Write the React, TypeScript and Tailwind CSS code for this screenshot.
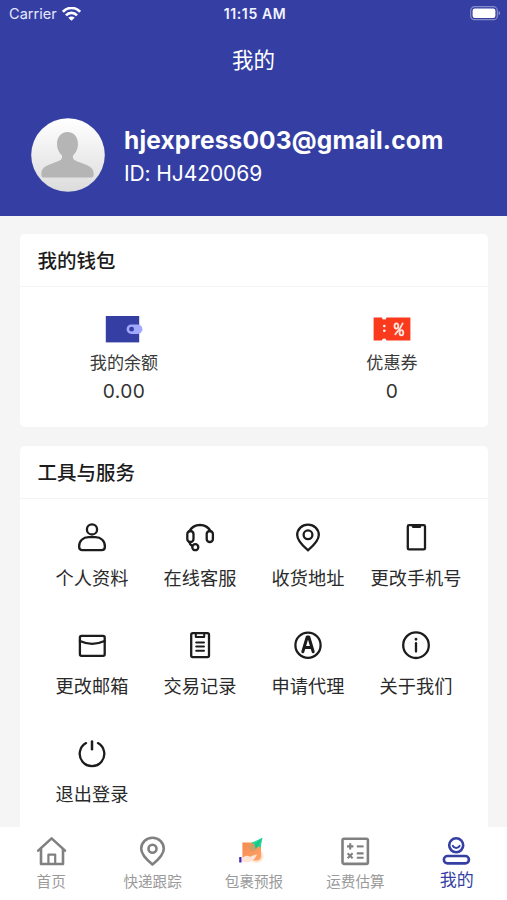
import type { ReactNode } from "react";

interface Item {
  label: string;
  icon: ReactNode;
}

const TOOLS: Item[] = [
  { label: "个人资料", icon: <PersonIcon /> },
  { label: "在线客服", icon: <HeadsetIcon /> },
  { label: "收货地址", icon: <PinIcon /> },
  { label: "更改手机号", icon: <PhoneIcon /> },
  { label: "更改邮箱", icon: <MailIcon /> },
  { label: "交易记录", icon: <RecordIcon /> },
  { label: "申请代理", icon: <AgentIcon /> },
  { label: "关于我们", icon: <InfoIcon /> },
  { label: "退出登录", icon: <PowerIcon /> },
];

const TABS: Item[] = [
  { label: "首页", icon: <HomeIcon /> },
  { label: "快递跟踪", icon: <TrackIcon /> },
  { label: "包裹预报", icon: <ParcelIcon /> },
  { label: "运费估算", icon: <CalcIcon /> },
  { label: "我的", icon: <MeIcon /> },
];

const ACTIVE_TAB = "我的";

export default function App() {
  return (
    <div className="w-[507px] h-[900px] overflow-hidden flex flex-col bg-[#f5f5f5] font-['Inter','Noto_Sans_CJK_SC',sans-serif] text-[#2a2a2a]">
      {/* Header */}
      <header className="h-[216px] shrink-0 bg-[#353fa3] text-white flex flex-col">
        <StatusBar />
        <h1 className="h-16 pt-[2px] flex items-center justify-center text-[21.5px] leading-none">我的</h1>
        <div className="flex items-center gap-[19px] pl-[31px] mt-[26px]">
          <Avatar />
          <div className="flex flex-col pt-[3px]">
            <p className="text-[24.5px] leading-[33px] font-bold tracking-[0.15px]">hjexpress003@gmail.com</p>
            <p className="text-[21px] leading-[33px] tracking-[-0.1px]">ID: HJ420069</p>
          </div>
        </div>
      </header>

      <main className="flex-1 min-h-0 px-[19.5px] pt-[18px] flex flex-col gap-[19px] overflow-hidden">
        <Card title="我的钱包" className="h-[193px]">
          <div className="flex justify-between pl-[50px] pr-[42px] pt-[27px]">
            <WalletStat icon={<WalletIcon />} label="我的余额" value="0.00" />
            <WalletStat icon={<CouponIcon />} label="优惠券" value="0" />
          </div>
        </Card>

        <Card title="工具与服务" className="h-[420px]">
          <div className="grid grid-cols-4 auto-rows-[108px] px-[18px] pt-[22px]">
            {TOOLS.map((t) => (
              <div key={t.label} className="flex flex-col items-center">
                {t.icon}
                <span className="mt-[13px] pl-px text-[18.2px] leading-[24px] whitespace-nowrap">{t.label}</span>
              </div>
            ))}
          </div>
        </Card>
      </main>

      {/* Tab bar */}
      <nav className="h-[73px] shrink-0 bg-white grid grid-cols-5">
        {TABS.map((t) => (
          <div key={t.label} className="flex flex-col items-center pt-[8px]">
            {t.icon}
            {t.label === ACTIVE_TAB ? (
              <span className="mt-px pl-px text-[17px] leading-[20px] text-[#353fa3]">{t.label}</span>
            ) : (
              <span className="mt-[4px] pl-px text-[14.6px] leading-[18px] text-[#9a9a9a]">{t.label}</span>
            )}
          </div>
        ))}
      </nav>
    </div>
  );
}

/* ── Layout pieces ───────────────────────────────────────── */

function StatusBar() {
  return (
    <div className="h-7 grid grid-cols-3 items-center pl-[9px] pr-[6px] text-[14.5px] leading-none">
      <div className="flex items-center gap-[5px] text-[#e6e8ff]">
        <span className="tracking-[0.05px]">Carrier</span>
        <svg width="19" height="15" viewBox="0 0 19 15" fill="none" stroke="#fff" strokeWidth="2.7">
          <path d="M0.9 4.8C5.5-.3 13.5-.3 18.1 4.8" />
          <path d="M4 8.3C7 5.1 12 5.1 15 8.3" />
          <path d="M9.5 13.8L6.3 10.7C8.1 9 10.9 9 12.7 10.7Z" fill="#fff" stroke="none" />
        </svg>
      </div>
      <span className="text-center font-semibold text-[14px] tracking-[0.6px] text-[#f2f3ff]">11:15 AM</span>
      <svg className="justify-self-end" width="31" height="16" viewBox="0 0 31 16">
        <rect x="0.7" y="0.7" width="26.6" height="13" rx="3.8" fill="none" stroke="#fff" strokeOpacity="0.4" strokeWidth="1.2" />
        <rect x="2.6" y="2.5" width="22.8" height="9.4" rx="2.2" fill="#fff" />
        <path d="M28.6 5.1C30.6 5.9 30.6 8.5 28.6 9.3Z" fill="#fff" fillOpacity="0.45" />
      </svg>
    </div>
  );
}

function Card({ title, className, children }: { title: string; className: string; children: ReactNode }) {
  return (
    <section className={`shrink-0 bg-white rounded-[5px] ${className}`}>
      <h2 className="h-[53px] pl-[18px] pt-[3px] flex items-center border-b-[1.5px] border-[#f4f4f4] text-[19.5px] leading-none font-medium text-[#1c1c1c]">
        {title}
      </h2>
      {children}
    </section>
  );
}

function WalletStat({ icon, label, value }: { icon: ReactNode; label: string; value: string }) {
  return (
    <div className="w-[108px] flex flex-col items-center">
      {icon}
      <span className="mt-[7px] pl-px text-[17.1px] leading-[24px] text-[#3a3a3a]">{label}</span>
      <span className="mt-[3px] pl-px text-[19.2px] leading-[26px] tracking-[0.4px] text-[#333]">{value}</span>
    </div>
  );
}

function Avatar() {
  return (
    <svg width="74" height="74" viewBox="0 0 74 74">
      <defs>
        <linearGradient id="avatar" x1="0" y1="0" x2="0" y2="1">
          <stop offset="0" stopColor="#fff" />
          <stop offset="1" stopColor="#dcdcdc" />
        </linearGradient>
      </defs>
      <circle cx="37" cy="37" r="36.8" fill="url(#avatar)" />
      <path
        d="M36.5 14C30 14 26 19 26 26C26 31 28.4 35.4 31 37.4C31.6 41.4 29.6 42.2 25 44C18 46.6 11 48.6 10.4 54.4V57.6Q10.4 59.4 12.4 59.4H60.6Q62.6 59.4 62.6 57.6V54.4C62 48.6 55 46.6 48 44C43.4 42.2 41.4 41.4 42 37.4C44.6 35.4 47 31 47 26C47 19 43 14 36.5 14Z"
        fill="#b5b5b5"
      />
    </svg>
  );
}

/* ── Wallet icons ────────────────────────────────────────── */

function WalletIcon() {
  return (
    <svg width="38" height="30" viewBox="0 0 38 30">
      <rect x="0.8" y="2" width="33.4" height="26.4" fill="#353fa3" />
      <rect x="21.6" y="10.4" width="15.8" height="9.6" rx="4.8" fill="#a3a8ff" />
      <circle cx="26.6" cy="15.2" r="2.4" fill="#353fa3" />
    </svg>
  );
}

function CouponIcon() {
  return (
    <svg width="38" height="30" viewBox="0 0 38 30">
      <path d="M0.6 3.4H9A2.2 2.2 0 0 0 13.4 3.4H37.4V26.6H13.4A2.2 2.2 0 0 0 9 26.6H0.6Z" fill="#fb3a1d" />
      <g fill="#fff">
        <circle cx="11.3" cy="12" r="1.3" />
        <circle cx="11.3" cy="16.8" r="1.3" />
      </g>
      <g fill="none" stroke="#ffe5df" strokeWidth="1.8">
        <ellipse cx="23.4" cy="12" rx="1.9" ry="2.6" />
        <ellipse cx="28.4" cy="18.8" rx="1.9" ry="2.6" />
        <path d="M30 8.8C28 14 25.6 17 21.8 20.8" />
      </g>
    </svg>
  );
}

/* ── Tool icons ──────────────────────────────────────────── */

function ToolSvg({ children }: { children: ReactNode }) {
  return (
    <svg
      width="32"
      height="32"
      viewBox="0 0 32 32"
      fill="none"
      stroke="#1c1c1c"
      strokeWidth="2.3"
      strokeLinecap="round"
      strokeLinejoin="round"
    >
      {children}
    </svg>
  );
}

function PersonIcon() {
  return (
    <ToolSvg>
      <circle cx="16" cy="8.4" r="5.1" />
      <path d="M12.6 16.2H19.4C25 16.2 28.9 20 28.9 25.4C28.9 28 27.8 29.1 25.6 29.1H6.4C4.2 29.1 3.1 28 3.1 25.4C3.1 20 7 16.2 12.6 16.2Z" />
    </ToolSvg>
  );
}

function HeadsetIcon() {
  return (
    <ToolSvg>
      <path d="M5.4 10.4C7.4 6.4 11.3 4 16 4S24.6 6.4 26.6 10.4" />
      <rect x="3.3" y="10" width="6.2" height="11" rx="3.1" />
      <rect x="22.7" y="10" width="6.2" height="11" rx="3.1" />
      <path d="M5.2 20.8C5.6 22.8 6.6 24 8.2 25" />
      <circle cx="11.3" cy="26.2" r="3" />
    </ToolSvg>
  );
}

function PinIcon() {
  return (
    <ToolSvg>
      <path d="M16 29.3C13.6 27.2 5.2 20.6 5.2 14.1C5.2 8.1 10 3.6 16 3.6S26.8 8.1 26.8 14.1C26.8 20.6 18.4 27.2 16 29.3Z" />
      <circle cx="16" cy="13.8" r="4.4" />
    </ToolSvg>
  );
}

function PhoneIcon() {
  return (
    <ToolSvg>
      <rect x="7.8" y="4.2" width="17.2" height="24.2" rx="1.2" />
      <path d="M13.4 5.4H19.6" strokeWidth="3.2" />
    </ToolSvg>
  );
}

function MailIcon() {
  return (
    <ToolSvg>
      <rect x="3.9" y="6.8" width="24.8" height="20" rx="1.6" />
      <path d="M3.9 12Q16 17.6 28.7 12" />
    </ToolSvg>
  );
}

function RecordIcon() {
  return (
    <ToolSvg>
      <rect x="7.2" y="4.2" width="17.8" height="24" rx="1.6" />
      <path d="M11.8 4.4V8H20.2V4.4" strokeWidth="2" />
      <path d="M12.2 13.4H20M12.2 17.6H20M12.2 21.8H20" strokeWidth="2" />
    </ToolSvg>
  );
}

function AgentIcon() {
  return (
    <ToolSvg>
      <circle cx="16" cy="16.2" r="12.6" />
      <path d="M10.8 22.7L15.2 8H16.8L21.2 22.7M12.4 18.4H19.6" strokeWidth="3" />
    </ToolSvg>
  );
}

function InfoIcon() {
  return (
    <ToolSvg>
      <circle cx="16" cy="16.2" r="12.8" />
      <path d="M16 14.2V22.6" strokeWidth="2.3" />
      <path d="M16 10V10.3" strokeWidth="2.7" />
    </ToolSvg>
  );
}

function PowerIcon() {
  return (
    <ToolSvg>
      <path d="M10 6.1A12.3 12.3 0 1 0 22 6.1" />
      <path d="M16 4.6V12.2" strokeWidth="2.5" />
    </ToolSvg>
  );
}

/* ── Tab icons ───────────────────────────────────────────── */

function TabSvg({ color = "#808080", children }: { color?: string; children: ReactNode }) {
  return (
    <svg width="34" height="34" viewBox="0 0 34 34" fill="none" stroke={color} strokeWidth="2.6" strokeLinejoin="round" strokeLinecap="round">
      {children}
    </svg>
  );
}

function HomeIcon() {
  return (
    <TabSvg>
      <path d="M4.2 15.6L17.6 3.4L31 15.6" />
      <path d="M7 14V29H29V14" />
      <path d="M14.4 28.8V19.6H21.2V28.8" strokeWidth="2.2" />
    </TabSvg>
  );
}

function TrackIcon() {
  return (
    <TabSvg>
      <path d="M17.5 29.5C14.9 27.4 6.2 20.4 6.2 13.8C6.2 7.6 11.1 2.8 17.5 2.8S28.8 7.6 28.8 13.8C28.8 20.4 20.1 27.4 17.5 29.5Z" />
      <circle cx="17.5" cy="13.8" r="4" />
    </TabSvg>
  );
}

function ParcelIcon() {
  return (
    <svg width="34" height="34" viewBox="0 0 34 34">
      <defs>
        <linearGradient id="parcel" x1="0" y1="0" x2="1" y2="1">
          <stop offset="0" stopColor="#f58a4e" />
          <stop offset="1" stopColor="#ffa468" />
        </linearGradient>
        <radialGradient id="glow">
          <stop offset="0.4" stopColor="#ffa868" stopOpacity="0.8" />
          <stop offset="1" stopColor="#ffc9a0" stopOpacity="0" />
        </radialGradient>
      </defs>
      <circle cx="20.5" cy="21" r="8" fill="url(#glow)" />
      <path d="M6.4 7.4H23.4Q25 7.4 25 9V21Q25 25 21 25.2H6.4Z" fill="url(#parcel)" />
      <path d="M12.6 11L19.5 8L20 15L15 16Z" fill="#c2a070" fillOpacity="0.8" />
      <path d="M26.4 2.8L15 8.1L18.8 9.6L19.8 14L21.8 11.2L24.6 12.8Z" fill="#21d894" />
      <path d="M26.4 2.8L18.8 9.6L19.8 14L21.8 11.2Z" fill="#17c48a" />
      <path d="M6 22.6C8 22 9 20.4 11.4 20.7L14.6 21.8C16.4 20.8 18.8 19.3 21 20C19.7 22.2 17.9 25.9 13.8 26.7C10.8 27.1 8.4 26.7 6 26.8Z" fill="#ffe3d5" />
      <rect x="3.2" y="22" width="2.3" height="5.4" rx="0.5" fill="#4329b5" />
    </svg>
  );
}

function CalcIcon() {
  return (
    <TabSvg>
      <rect x="4.5" y="3.7" width="25.4" height="25.2" rx="1.6" />
      <g strokeWidth="2.1" strokeLinecap="butt">
        <path d="M9 11.4H15.4M12.2 8.2V14.6" />
        <path d="M18.8 11.4H25.6" />
        <path d="M9.6 18.2L14.6 23.2M14.6 18.2L9.6 23.2" />
        <path d="M18.8 18.4H25.6M18.8 22.8H25.6" />
      </g>
    </TabSvg>
  );
}

function MeIcon() {
  return (
    <TabSvg color="#353fa3">
      <circle cx="17.2" cy="10.3" r="7" />
      <path d="M13.8 10.8C15 13.6 19.4 13.6 20.6 10.8" strokeWidth="2" />
      <rect x="4.9" y="21" width="25" height="7.4" rx="3.6" />
    </TabSvg>
  );
}
